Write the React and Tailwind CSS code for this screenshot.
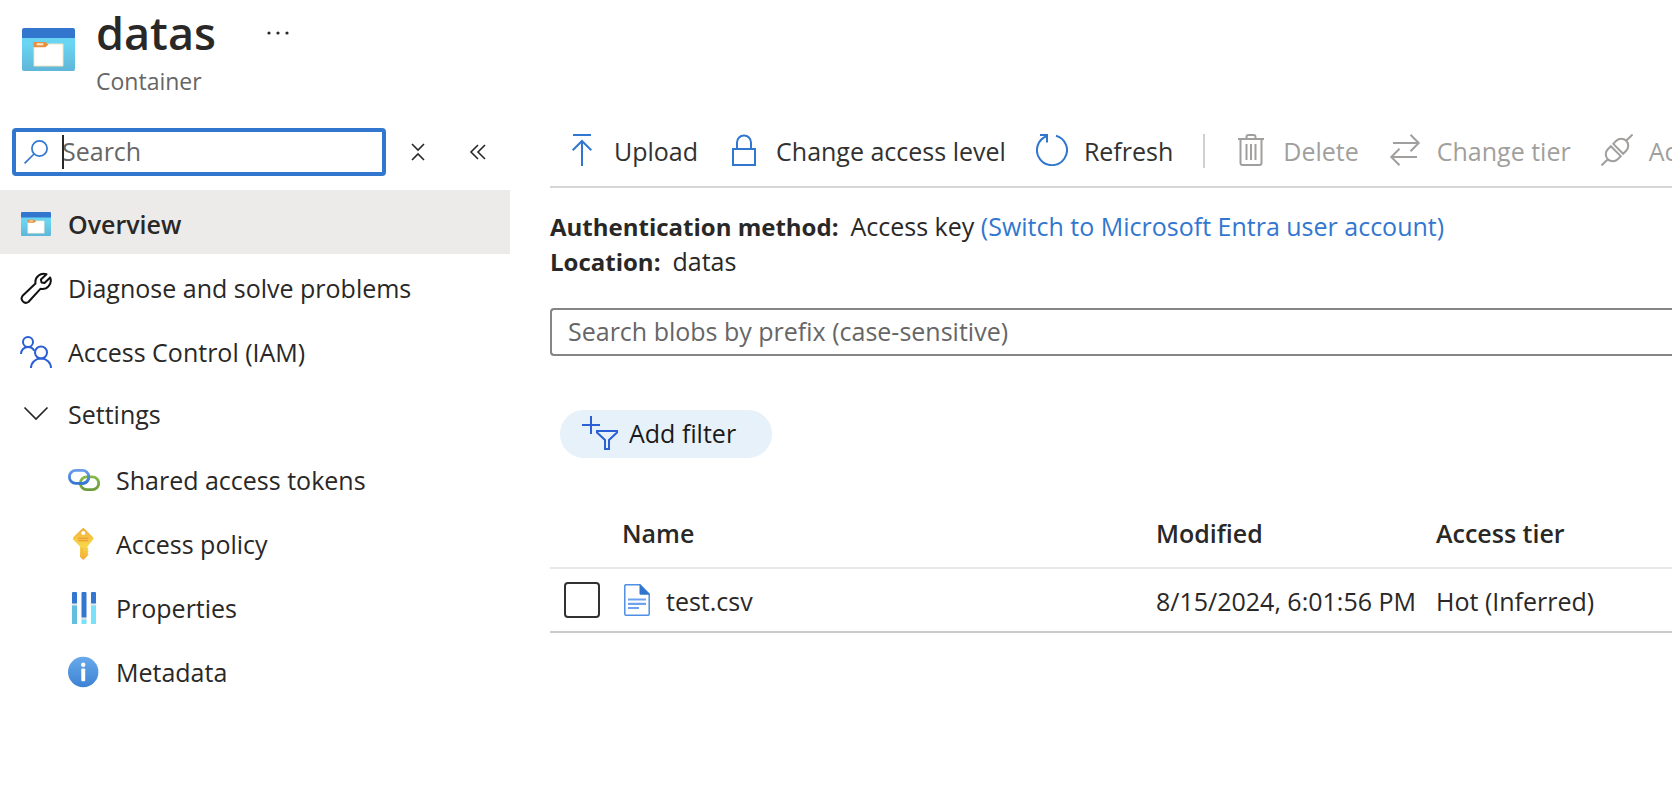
import React from "react";

function ContainerIcon({ className, id }) {
  return (
    <svg className={className} viewBox="0 0 53 43" preserveAspectRatio="none" aria-hidden="true">
      <defs>
        <linearGradient id={id} x1="0" y1="0" x2="0" y2="1">
          <stop offset="0.2" stopColor="#6ad5f3" />
          <stop offset="1" stopColor="#5fb6d8" />
        </linearGradient>
      </defs>
      <path d="M0 9h53v32a2 2 0 0 1-2 2H2a2 2 0 0 1-2-2z" fill={`url(#${id})`} />
      <path d="M2 0h49a2 2 0 0 1 2 2v8H0V2a2 2 0 0 1 2-2z" fill="#3376cd" />
      <path d="M12 16h29v22H12z" fill="#fff" stroke="#efe3c4" strokeWidth="1" />
      <path d="M12 14h11.500l3 2.500-3 2.700H12a.8.8 0 0 1-.8-.8v-3.600a.8.8 0 0 1 .8-.8z" fill="#e8913c" />
      <rect x="14.500" y="15.200" width="7" height="2" rx="1" fill="#fbe6d0" />
    </svg>
  );
}

function SearchIcon() {
  return (
    <svg className="h-6 w-6" viewBox="0 0 24 24" fill="none" stroke="#3277cf" strokeWidth="1.700" aria-hidden="true">
      <circle cx="15.500" cy="8.500" r="7.600" />
      <path d="M10 14L.6 23.400" />
    </svg>
  );
}

function WrenchIcon() {
  return (
    <svg className="h-8 w-8" viewBox="0 0 32 32" fill="none" stroke="#111" strokeWidth="2" strokeLinejoin="round" aria-hidden="true">
      <path d="M26.500 2.300A8.300 8.300 0 0 0 15.500 11.500L2.600 23.800a4.300 4.300 0 0 0 5.800 6.200L20.400 16.800A8.500 8.500 0 0 0 30.200 5.500L24.500 11l-3-.6-.6-2.800z" />
    </svg>
  );
}

function PeopleIcon() {
  return (
    <svg className="h-8 w-8" viewBox="0 0 32 32" fill="none" stroke="#2a5fd6" strokeWidth="2" aria-hidden="true">
      <circle cx="8" cy="6" r="5" />
      <path d="M1 18c0-4 3-7 7-7 3 0 5 1.500 6.300 3.700" />
      <circle cx="21" cy="16.500" r="6" />
      <path d="M11 32c0-5.500 4.500-9.500 10-9.500S31 26.500 31 32" />
    </svg>
  );
}

function ChevronIcon() {
  return (
    <svg className="h-8 w-8" viewBox="0 0 32 32" fill="none" stroke="#292827" strokeWidth="1.700" aria-hidden="true">
      <path d="M4.500 9.500L16 21 27.500 9.500" />
    </svg>
  );
}

function LinkIcon() {
  return (
    <svg className="h-8 w-8" viewBox="0 0 32 32" fill="none" strokeWidth="2.800" aria-hidden="true">
      <defs>
        <linearGradient id="chainBlue" gradientUnits="userSpaceOnUse" x1="0" y1="5" x2="0" y2="20">
          <stop offset="0" stopColor="#6fa0ee" />
          <stop offset="1" stopColor="#3174cf" />
        </linearGradient>
        <linearGradient id="chainGreen" gradientUnits="userSpaceOnUse" x1="0" y1="11" x2="0" y2="27">
          <stop offset="0" stopColor="#87bd48" />
          <stop offset="1" stopColor="#6b9a37" />
        </linearGradient>
      </defs>
      <rect x="1.400" y="6.400" width="19.400" height="13" rx="6.400" stroke="url(#chainBlue)" />
      <rect x="12.300" y="12.800" width="18.400" height="12.800" rx="6.400" stroke="url(#chainGreen)" />
      <path d="M20.500 11c1 4.200-1.500 8.400-6 8.400h-4" stroke="url(#chainBlue)" />
    </svg>
  );
}

function KeyIcon() {
  return (
    <svg className="h-8 w-8" viewBox="0 0 32 32" aria-hidden="true">
      <defs>
        <linearGradient id="keyFill" x1="0" y1="0" x2="0" y2="1">
          <stop offset="0" stopColor="#f1ae3c" />
          <stop offset="0.550" stopColor="#f8d648" />
          <stop offset="1" stopColor="#f0ab3c" />
        </linearGradient>
      </defs>
      <path d="M14 .8a1.800 1.800 0 0 1 2.600 0l8.200 8.200a2 2 0 0 1 0 2.800L19.500 18.500v1.300l1 1-1 1.500 1 1.300-1 1.500 1 1.500-1.500 2-3.700 3.400-3.300-3V18.500L5.500 11.800a2 2 0 0 1 0-2.800z" fill="url(#keyFill)" />
      <circle cx="15.300" cy="5" r="2.100" fill="#fff" />
      <path d="M10.300 10.400h10M10.300 12.700h10" stroke="#ef9b35" strokeWidth="1.200" />
      <path d="M14 20v8" stroke="#f3b73f" strokeWidth="1.200" />
    </svg>
  );
}

function SlidersIcon() {
  return (
    <svg className="h-8 w-8" viewBox="0 0 32 32" aria-hidden="true">
      <g fill="#3477d1">
        <rect x="4" y="0" width="5" height="12" rx="1" />
        <rect x="13.500" y="0" width="5" height="26" rx="1" />
        <rect x="23" y="0" width="5" height="12" rx="1" />
      </g>
      <path d="M4 13h5v19H4z" fill="#64bedd" />
      <path d="M13.500 27h5v5h-5zM23 13h5v19h-5z" fill="#7ae1fa" />
      <path d="M3.500 11.500h6v2h-6zM13 25.500h6v2h-6zM22.500 11.500h6v2h-6z" fill="#e6e6e6" />
    </svg>
  );
}

function InfoIcon() {
  return (
    <svg className="h-8 w-8" viewBox="0 0 32 32" aria-hidden="true">
      <defs>
        <linearGradient id="infoFill" x1="0" y1="0" x2="0" y2="1">
          <stop offset="0" stopColor="#68aaea" />
          <stop offset="1" stopColor="#3d82d4" />
        </linearGradient>
      </defs>
      <circle cx="15.200" cy="16" r="15.200" fill="url(#infoFill)" />
      <circle cx="15.200" cy="8.800" r="2.200" fill="#fff" />
      <rect x="13.300" y="12.600" width="3.900" height="12.600" rx="1" fill="#fff" />
    </svg>
  );
}

function UploadIcon() {
  return (
    <svg className="h-8 w-8" viewBox="0 0 32 32" fill="none" stroke="#3277cf" strokeWidth="2" aria-hidden="true">
      <path d="M7 1h18M16 32V7.500M6.700 16.300L16 7l9.300 9.300" />
    </svg>
  );
}

function LockIcon() {
  return (
    <svg className="h-8 w-8" viewBox="0 0 32 32" fill="none" stroke="#3277cf" strokeWidth="2" aria-hidden="true">
      <path d="M5 15h22v16H5zM9 15V8.500a7 7 0 0 1 14 0V15" />
    </svg>
  );
}

function RefreshIcon() {
  return (
    <svg className="h-8 w-8" viewBox="0 0 32 32" fill="none" stroke="#3277cf" strokeWidth="2" aria-hidden="true">
      <path d="M20 1.700A15 15 0 1 1 11 2" />
      <path d="M4 1h7v7.500" />
    </svg>
  );
}

function TrashIcon() {
  return (
    <svg className="h-8 w-8" viewBox="0 0 32 32" fill="none" stroke="#a19f9d" strokeWidth="2" aria-hidden="true">
      <path d="M3 5h26M11.500 5V3a2 2 0 0 1 2-2h5a2 2 0 0 1 2 2v2M5.500 5v24a2 2 0 0 0 2 2h17a2 2 0 0 0 2-2V5M11.500 10v16M16 10v16M20.500 10v16" />
    </svg>
  );
}

function SwapIcon() {
  return (
    <svg className="h-8 w-8" viewBox="0 0 32 32" fill="none" stroke="#a19f9d" strokeWidth="2" aria-hidden="true">
      <path d="M4 9h26M21.500 .8L29.700 9l-8.200 8.200M28 23H3M10.500 14.800L2.300 23l8.200 8.200" />
    </svg>
  );
}

function PlugIcon() {
  return (
    <svg className="h-8 w-8" viewBox="0 0 32 32" fill="none" stroke="#a19f9d" strokeWidth="2" aria-hidden="true">
      <g transform="rotate(-45 16 16)">
        <path d="M-6 16H3M29 16h9M14.300 9H10a7 7 0 0 0 0 14h4.300zM17.700 9H22a7 7 0 0 1 0 14h-4.300z" />
      </g>
    </svg>
  );
}

function FilterIcon() {
  return (
    <svg className="h-9 w-9" viewBox="0 0 36 36" fill="none" stroke="#2a5fd6" strokeWidth="2" aria-hidden="true">
      <path d="M0 10h18M9 1v18M15 16h20v1.500L27 25v9h-4v-9l-8-7.500z" />
    </svg>
  );
}

function FileIcon() {
  return (
    <svg className="h-8 w-[26px]" viewBox="0 0 26 32" aria-hidden="true">
      <path d="M1.500.8H16L25.200 10v20a1.200 1.200 0 0 1-1.200 1.200H2A1.200 1.200 0 0 1 .8 30V1.500z" fill="#fff" stroke="#4f8fe6" strokeWidth="1.500" />
      <path d="M15.500 0L26 10.800h-9a1.500 1.500 0 0 1-1.500-1.500z" fill="#3074cd" />
      <path d="M4 15.500h18M4 19.800h18M4 24h11" stroke="#6ea2ee" strokeWidth="2.200" />
    </svg>
  );
}

const navItems = [
  { label: "Overview", icon: <ContainerIcon id="navContainer" className="mx-px h-6 w-[30px]" />, active: true },
  { label: "Diagnose and solve problems", icon: <WrenchIcon /> },
  { label: "Access Control (IAM)", icon: <PeopleIcon /> },
];

const settingsItems = [
  { label: "Shared access tokens", icon: <LinkIcon /> },
  { label: "Access policy", icon: <KeyIcon /> },
  { label: "Properties", icon: <SlidersIcon /> },
  { label: "Metadata", icon: <InfoIcon /> },
];

function ToolButton({ icon, label, disabled }) {
  return (
    <button
      type="button"
      disabled={disabled}
      className="flex shrink-0 items-start gap-4 whitespace-nowrap text-[#323130] disabled:text-[#a19f9d]"
    >
      {icon}
      <span className="pt-px">{label}</span>
    </button>
  );
}

export default function App() {
  return (
    <div className="min-h-screen overflow-hidden bg-white font-['Open_Sans',sans-serif] text-[25px] leading-8 text-[#292827]">
      <header className="flex gap-[21px] pl-[22px]">
        <ContainerIcon id="headContainer" className="mt-7 h-[43px] w-[53px]" />
        <div>
          <div className="flex items-center gap-[50px]">
            <h1 className="text-[45px] leading-[66px] font-semibold">datas</h1>
            <button type="button" aria-label="More actions">
              <svg className="h-4 w-6" viewBox="0 0 24 16" fill="#292827" aria-hidden="true">
                <circle cx="3" cy="8" r="1.600" />
                <circle cx="12" cy="8" r="1.600" />
                <circle cx="21" cy="8" r="1.600" />
              </svg>
            </button>
          </div>
          <p className="text-[23px] leading-[30px] text-[#666]">Container</p>
        </div>
      </header>

      <div className="flex pt-8">
        <aside className="w-[510px] shrink-0">
          <div className="flex items-center pl-3">
            <div className="relative flex h-12 w-[374px] items-center gap-3 rounded border-4 border-[#3277cf] pl-2">
              <SearchIcon />
              <input
                type="text"
                aria-label="Search menu"
                placeholder="Search"
                className="h-full min-w-0 flex-1 pb-0.5 pl-0.5 outline-none placeholder:text-[#666]"
              />
              <span className="absolute left-[46px] h-[34px] w-0.5 bg-[#292827]" />
            </div>
            <button type="button" aria-label="Collapse all" className="ml-5">
              <svg className="h-6 w-6" viewBox="0 0 24 24" fill="none" stroke="#292827" strokeWidth="1.600" aria-hidden="true">
                <path d="M6 4l6 6 6-6M6 20l6-6 6 6" />
              </svg>
            </button>
            <button type="button" aria-label="Hide menu" className="ml-9">
              <svg className="h-6 w-6" viewBox="0 0 24 24" fill="none" stroke="#292827" strokeWidth="1.600" aria-hidden="true">
                <path d="M12 5l-7 7 7 7M19 5l-7 7 7 7" />
              </svg>
            </button>
          </div>

          <nav aria-label="Container menu" className="pt-[14px]">
            <ul>
              {navItems.map((item) => (
                <li key={item.label}>
                  <a
                    href="#"
                    className={
                      item.active
                        ? "flex h-16 items-center gap-4 bg-[#ecebe9] pt-[3px] pl-5 font-semibold"
                        : "flex h-16 items-center gap-4 pt-[3px] pl-5"
                    }
                  >
                    {item.icon}
                    {item.label}
                  </a>
                </li>
              ))}
              <li>
                <button type="button" aria-expanded="true" className="flex h-16 w-full items-center gap-4 pl-5">
                  <ChevronIcon />
                  Settings
                </button>
                <ul>
                  {settingsItems.map((item) => (
                    <li key={item.label}>
                      <a href="#" className="flex h-16 items-center gap-4 pt-[3px] pl-[68px]">
                        {item.icon}
                        {item.label}
                      </a>
                    </li>
                  ))}
                </ul>
              </li>
            </ul>
          </nav>
        </aside>

        <main className="min-w-0 flex-1 pl-10">
          <div className="flex h-[60px] items-start gap-[30px] overflow-hidden border-b-2 border-[#d6d6d6] pt-1.5 pl-4">
            <ToolButton icon={<UploadIcon />} label="Upload" />
            <ToolButton icon={<LockIcon />} label="Change access level" />
            <ToolButton icon={<RefreshIcon />} label="Refresh" />
            <span className="h-[34px] w-0.5 shrink-0 bg-[#d0d0d0]" />
            <ToolButton icon={<TrashIcon />} label="Delete" disabled />
            <ToolButton icon={<SwapIcon />} label="Change tier" disabled />
            <ToolButton icon={<PlugIcon />} label="Acquire lease" disabled />
          </div>

          <dl className="pt-[21px] leading-[35px]">
            <div className="flex gap-3">
              <dt className="text-[24px] font-bold">Authentication method:</dt>
              <dd>
                Access key{" "}
                <a href="#" className="text-[#3277cf]">
                  (Switch to Microsoft Entra user account)
                </a>
              </dd>
            </div>
            <div className="flex gap-3">
              <dt className="text-[24px] font-bold">Location:</dt>
              <dd>datas</dd>
            </div>
          </dl>

          <input
            type="text"
            aria-label="Search blobs by prefix"
            placeholder="Search blobs by prefix (case-sensitive)"
            className="mt-[29px] block h-12 w-full rounded-l border-2 border-r-0 border-[#858585] pb-0.5 pl-4 outline-none placeholder:text-[#666]"
          />

          <button
            type="button"
            className="mt-[54px] ml-[10px] flex h-12 items-center gap-[11px] rounded-full bg-[#e7f1fa] pr-9 pb-0.5 pl-[22px] text-[#1b1a19]"
          >
            <FilterIcon />
            Add filter
          </button>

          <table className="mt-[42px] w-full table-fixed text-left">
            <colgroup>
              <col className="w-[72px]" />
              <col />
              <col className="w-[280px]" />
              <col className="w-[236px]" />
            </colgroup>
            <thead>
              <tr className="h-[68px] border-b-2 border-[#e8e8e8]">
                <td />
                <th className="pb-0.5 font-semibold">Name</th>
                <th className="pb-0.5 font-semibold">Modified</th>
                <th className="pb-0.5 font-semibold">Access tier</th>
              </tr>
            </thead>
            <tbody>
              <tr className="h-16 border-b-2 border-[#cacaca]">
                <td className="pl-[14px]">
                  <input
                    type="checkbox"
                    aria-label="Select test.csv"
                    className="block size-9 appearance-none rounded border-2 border-[#323130] bg-white"
                  />
                </td>
                <td>
                  <a href="#" className="flex items-center gap-4 pl-0.5">
                    <FileIcon />
                    <span className="pt-0.5">test.csv</span>
                  </a>
                </td>
                <td className="pt-0.5 whitespace-nowrap">8/15/2024, 6:01:56 PM</td>
                <td className="pt-0.5 whitespace-nowrap">Hot (Inferred)</td>
              </tr>
            </tbody>
          </table>
        </main>
      </div>
    </div>
  );
}
